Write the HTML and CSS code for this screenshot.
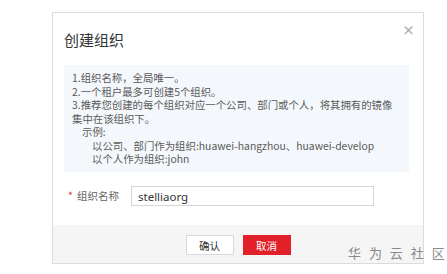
FILE: index.html
```html
<!DOCTYPE html>
<html lang="zh-CN">
<head>
  <meta charset="UTF-8" />
  <title>创建组织</title>
  <link rel="stylesheet" href="styles.css">
</head>
<body>
  <div class="dialog">
    <div class="dialog-head">
      <h1>创建组织</h1>
      <span class="close">&times;</span>
    </div>

    <div class="tips">
      <p>1.组织名称，全局唯一。</p>
      <p>2.一个租户最多可创建5个组织。</p>
      <p>3.推荐您创建的每个组织对应一个公司、部门或个人，将其拥有的镜像集中在该组织下。</p>
      <p class="indent1">示例:</p>
      <p class="indent2">以公司、部门作为组织:huawei-hangzhou、huawei-develop</p>
      <p class="indent2">以个人作为组织:john</p>
    </div>

    <div class="form-row">
      <label><span class="star">*</span>组织名称</label>
      <input type="text" value="stelliaorg">
    </div>

    <div class="dialog-foot">
      <button class="btn">确认</button>
      <button class="btn btn-red">取消</button>
    </div>
  </div>

  <div class="watermark">华 为 云 社 区</div>
</body>
</html>
```

FILE: styles.css
```css
* {
  box-sizing: border-box;
}

html, body {
  margin: 0;
  padding: 0;
}

body {
  font-family: "Noto Sans CJK SC", "Liberation Sans", sans-serif;
  background: #fff;
  width: 447px;
  height: 274px;
  position: relative;
  overflow: hidden;
}

.dialog {
  margin: 12px 0 0 52px;
  width: 372px;
  height: 252px;
  border: 1px solid #dcdcdc;
  background: #fff;
  display: flex;
  flex-direction: column;
}

.dialog-head {
  display: flex;
  justify-content: space-between;
  align-items: flex-start;
  padding: 16px 8px 0 11px;
  height: 52px;
}

h1 {
  margin: 0;
  font-size: 15px;
  font-weight: normal;
  color: #333;
  line-height: 22px;
}

.close {
  color: #b0b0b0;
  font-size: 13px;
  font-weight: bold;
  line-height: 13px;
  margin-top: -6px;
}

.tips {
  margin: 0 14px 0 11px;
  background: #f4f8fc;
  padding: 6px 8px 7px;
  height: 107px;
}

.tips p {
  margin: 0;
  font-size: 10.4px;
  line-height: 13.5px;
  color: #5a5a5a;
}

.tips .indent1 {
  padding-left: 10px;
}

.tips .indent2 {
  padding-left: 20px;
}

.form-row {
  display: flex;
  align-items: flex-start;
  padding: 14px 0 0 15px;
  height: 53px;
}

label {
  font-size: 10.5px;
  color: #666;
  width: 63px;
  line-height: 20px;
}

.star {
  color: #e4393c;
  margin-right: 4px;
}

input {
  width: 243px;
  height: 20px;
  border: 1px solid #d5d5d5;
  padding: 0 6px;
  font-family: "Noto Sans", "Liberation Sans", sans-serif;
  font-size: 11.5px;
  color: #333;
  outline: none;
}

.dialog-foot {
  flex: 1;
  background: #f5f5f5;
  display: flex;
  justify-content: center;
  align-items: center;
  gap: 9px;
  padding-top: 2px;
}

.btn {
  width: 48px;
  height: 20px;
  border: 1px solid #d9d9d9;
  background: #fff;
  font-family: inherit;
  font-size: 10.5px;
  color: #333;
  padding: 0;
  cursor: pointer;
}

.btn-red {
  background: #e2202a;
  border-color: #e2202a;
  color: #fff;
}

.watermark {
  position: absolute;
  left: 348px;
  top: 243px;
  font-size: 13px;
  color: #8a8a8a;
  letter-spacing: 2.5px;
  white-space: pre;
}
```
